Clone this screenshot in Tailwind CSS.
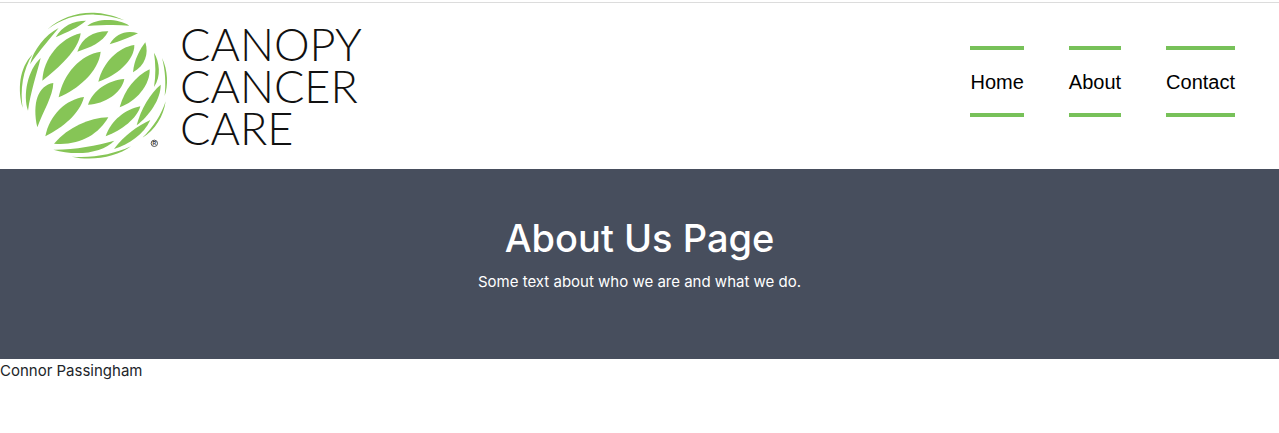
<!DOCTYPE html>
<html lang="en">
<head>
<meta charset="utf-8">
<meta name="viewport" content="width=device-width, initial-scale=1">
<title>About Us - Canopy Cancer Care</title>
<script src="https://cdn.jsdelivr.net/npm/@tailwindcss/browser@4"></script>
</head>
<body class="bg-white font-['Inter',sans-serif] text-[15px] text-[#212529]">
<header class="mt-0.5 flex flex-wrap items-start justify-between border-t border-[#dcdcdc] pr-11 pl-2.5">
  <a href="#" class="flex items-start text-[#111]" aria-label="Canopy Cancer Care">
    <svg class="h-[166px] w-[170px] shrink-0" viewBox="0 9 510 498" fill="#86c556" aria-hidden="true">
      <path d="M113 88C150 52 210 34 262 39C290 41 320 50 343 61C315 52 285 45 255 44C205 42 155 56 113 88Z"/>
      <path d="M232 78C260 54 325 55 358 77C320 74 280 75 232 78Z"/>
      <path d="M137 112C156 78 190 62 228 62C203 84 175 94 137 112Z"/>
      <path d="M60 193C70 150 105 105 146 84C122 113 90 150 60 193Z"/>
      <path d="M97 242C100 175 150 115 212 100C206 150 145 205 97 242Z"/>
      <path d="M202 155C216 112 252 93 295 94C278 128 240 143 202 155Z"/>
      <path d="M299 133C318 100 350 90 384 100C360 112 332 123 299 133Z"/>
      <path d="M265 245C278 188 325 142 373 135C374 182 318 228 265 245Z"/>
      <path d="M146 292C160 220 212 164 272 155C266 215 202 269 146 292Z"/>
      <path d="M369 217C372 180 390 147 406 127C417 160 405 198 369 217Z"/>
      <path d="M432 261C438 225 437 190 432 158C448 185 455 228 432 261Z"/>
      <path d="M456 174C474 210 475 258 464 288C468 250 466 210 456 174Z"/>
      <path d="M234 314C248 271 296 240 343 237C334 280 284 312 234 314Z"/>
      <path d="M329 322C343 270 377 228 419 208C421 254 379 305 329 322Z"/>
      <path d="M380 376C392 328 421 280 452 254C453 296 419 346 380 376Z"/>
      <path d="M396 414C430 383 455 342 467 304C461 348 436 390 396 414Z"/>
      <path d="M106 409C118 345 168 298 222 291C209 342 158 382 106 409Z"/>
      <path d="M82 382C66 310 84 256 130 249C129 288 99 335 82 382Z"/>
      <path d="M54 332C38 285 53 210 92 174C80 223 62 275 54 332Z"/>
      <path d="M68 163C38 210 30 270 38 324C23 272 26 205 68 163Z"/>
      <path d="M287 409C303 361 346 328 391 319C382 354 336 391 287 409Z"/>
      <path d="M132 431C175 382 237 353 295 352C264 406 205 438 132 431Z"/>
      <path d="M312 447C343 406 381 379 421 360C401 404 358 432 312 447Z"/>
      <path d="M130 449C190 450 259 437 313 422C279 458 200 470 130 449Z"/>
      <path d="M185 470C250 475 310 463 363 439C320 472 245 484 185 470Z"/>
      <circle cx="433" cy="430" r="9.500" fill="none" stroke="#333" stroke-width="2.500"/>
      <text x="433" y="435" text-anchor="middle" font-family="Liberation Sans, sans-serif" font-size="15" font-weight="700" fill="#333">R</text>
    </svg>
    <span class="mt-5 font-['Lato',sans-serif] text-[45px] leading-[42px] font-light">
      <span class="block">CANOPY</span>
      <span class="block">CANCER</span>
      <span class="block">CARE</span>
    </span>
  </a>
  <nav class="mt-[43px] flex gap-[45px] font-['Liberation_Sans',sans-serif] text-xl text-black">
    <a href="#" class="border-y-4 border-[#77c159] pt-px leading-[62px]">Home</a>
    <a href="#" class="border-y-4 border-[#77c159] pt-px leading-[62px]">About</a>
    <a href="#" class="border-y-4 border-[#77c159] pt-px leading-[62px]">Contact</a>
  </nav>
</header>
<main>
  <section class="bg-[#474e5d] px-12 pt-[45px] pb-[65px] text-center text-white">
    <h1 class="mb-2 text-[38px] leading-12 font-medium">About Us Page</h1>
    <p class="leading-6">Some text about who we are and what we do.</p>
  </section>
  <p class="leading-6">Connor Passingham</p>
</main>
</body>
</html>
